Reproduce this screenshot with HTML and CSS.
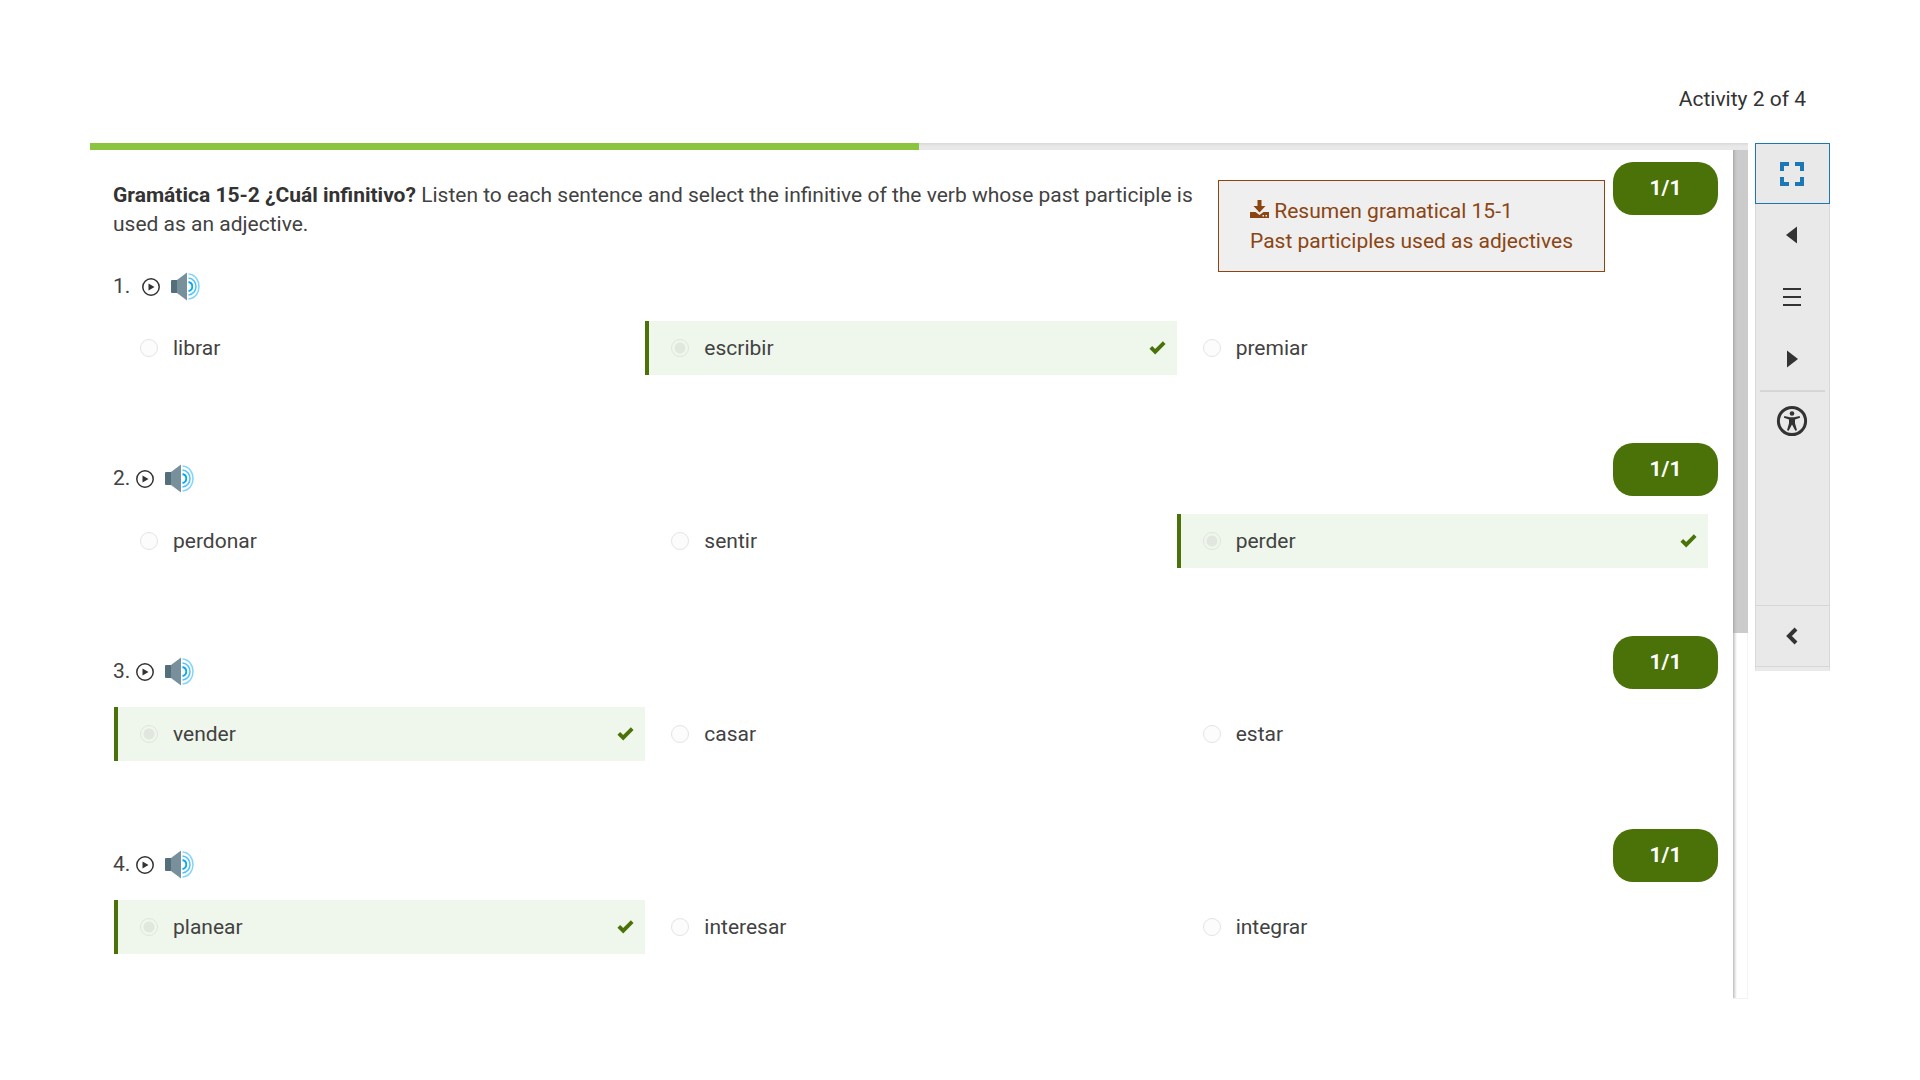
FILE: index.html
```html
<!DOCTYPE html>
<html lang="en">
<head>
<meta charset="utf-8">
<meta name="viewport" content="width=device-width, initial-scale=1">
<title>Gramática 15-2</title>
<link rel="stylesheet" href="styles.css">
</head>
<body>
<svg class="sprite" aria-hidden="true">
  <symbol id="play" viewBox="0 0 20 20"><circle cx="10" cy="10" r="8.200" fill="none" stroke="#333" stroke-width="1.500"/><path d="M7.500 6.500v7l6-3.500z" fill="#333"/></symbol>
  <symbol id="speaker" viewBox="0 0 30 30">
    <path d="M1 9q0-1 1-1h6v13H2q-1 0-1-1z" fill="#546e7a"/><path d="M7 8 17 .5v28L7 21z" fill="#78909c"/>
    <g fill="none" stroke-width="1.5"><path d="M18.500 10c5 1 5 8 0 9" stroke="#03a9f4" stroke-width="1.800"/><path d="M18.500 6c10 1 10 16 0 17" stroke="#4fc3f7"/><path d="M18.500 2c14 1 14 24 0 25" stroke="#81d4fa"/></g>
  </symbol>
  <symbol id="check" viewBox="0 0 17 17"><path fill="none" stroke="#4a7208" stroke-width="3.800" d="m1.800 7.300 4.400 4.400 9-9"/></symbol>
</svg>

<div class="page">
  <header class="page-header">Activity 2 of 4</header>
  <div class="workspace">
    <main class="player">
      <div class="progress" role="progressbar" aria-label="Progress" aria-valuenow="50"><div class="progress-value" style="width:50%"></div></div>
      <div class="viewport">
        <div class="activity">
          <div class="intro">
            <p class="direction"><strong>Gramática 15-2 ¿Cuál infinitivo?</strong> Listen to each sentence and select the infinitive of the verb whose past participle is used as an adjective.</p>
            <a class="summary" href="#resumen"><svg class="download" viewBox="0 0 19 18" aria-hidden="true"><path fill="currentColor" fill-rule="evenodd" d="M7.500 0h4v6h4L9.500 12.500 3.500 6h4zM0 12h5.500l4 3 4-3H19v6H0zM12.500 15v1.500H14V15zm3 0v1.500H17V15z"/></svg> Resumen gramatical 15-1<br>Past participles used as adjectives</a>
            <span class="score">1/1</span>
          </div>

          <section class="question question-first">
            <div class="question-head"><span class="number">1.&nbsp;</span>
              <button class="sound" aria-label="Play"><svg class="play"><use href="#play"/></svg></button>
              <button class="sound" aria-label="Audio 1"><svg class="speaker"><use href="#speaker"/></svg></button>
            </div>
            <div class="options">
              <label class="option"><input type="radio" name="q1" disabled>librar</label>
              <label class="option correct"><input type="radio" name="q1" disabled checked>escribir<svg class="check"><use href="#check"/></svg></label>
              <label class="option"><input type="radio" name="q1" disabled>premiar</label>
            </div>
          </section>

          <section class="question">
            <div class="question-head"><span class="number">2.</span>
              <button class="sound" aria-label="Play"><svg class="play"><use href="#play"/></svg></button>
              <button class="sound" aria-label="Audio 2"><svg class="speaker"><use href="#speaker"/></svg></button>
              <span class="score">1/1</span>
            </div>
            <div class="options">
              <label class="option"><input type="radio" name="q2" disabled>perdonar</label>
              <label class="option"><input type="radio" name="q2" disabled>sentir</label>
              <label class="option correct"><input type="radio" name="q2" disabled checked>perder<svg class="check"><use href="#check"/></svg></label>
            </div>
          </section>

          <section class="question">
            <div class="question-head"><span class="number">3.</span>
              <button class="sound" aria-label="Play"><svg class="play"><use href="#play"/></svg></button>
              <button class="sound" aria-label="Audio 3"><svg class="speaker"><use href="#speaker"/></svg></button>
              <span class="score">1/1</span>
            </div>
            <div class="options">
              <label class="option correct"><input type="radio" name="q3" disabled checked>vender<svg class="check"><use href="#check"/></svg></label>
              <label class="option"><input type="radio" name="q3" disabled>casar</label>
              <label class="option"><input type="radio" name="q3" disabled>estar</label>
            </div>
          </section>

          <section class="question">
            <div class="question-head"><span class="number">4.</span>
              <button class="sound" aria-label="Play"><svg class="play"><use href="#play"/></svg></button>
              <button class="sound" aria-label="Audio 4"><svg class="speaker"><use href="#speaker"/></svg></button>
              <span class="score">1/1</span>
            </div>
            <div class="options">
              <label class="option correct"><input type="radio" name="q4" disabled checked>planear<svg class="check"><use href="#check"/></svg></label>
              <label class="option"><input type="radio" name="q4" disabled>interesar</label>
              <label class="option"><input type="radio" name="q4" disabled>integrar</label>
            </div>
          </section>
        </div>
        <div class="scroll-track"><div class="scroll-thumb"></div></div>
      </div>
    </main>

    <nav class="toolbar" aria-label="Activity tools">
      <button class="tool tool-active" aria-label="Full screen"><svg width="26" height="26" viewBox="0 0 26 26"><path fill="none" stroke="#1b78b5" stroke-width="4" d="M3 10V3h7M16 3h7v7M23 16v7h-7M10 23H3v-7"/></svg></button>
      <button class="tool" aria-label="Previous"><svg width="12" height="18" viewBox="0 0 12 18"><path fill="#333" d="M11 .5v17L0 9z"/></svg></button>
      <button class="tool" aria-label="Contents"><svg width="18" height="18" viewBox="0 0 18 18"><path stroke="#333" stroke-width="2" d="M0 1h18M0 9h18M0 17h18"/></svg></button>
      <button class="tool" aria-label="Next"><svg width="12" height="18" viewBox="0 0 12 18"><path fill="#333" d="M1 .5v17L12 9z"/></svg></button>
      <div class="divider"></div>
      <button class="tool" aria-label="Accessibility"><svg width="32" height="32" viewBox="0 0 32 32"><circle cx="16" cy="16" r="13.600" fill="none" stroke="#333" stroke-width="3"/><circle cx="16" cy="8.500" r="2.300" fill="#333"/><path fill="#333" d="m8.400 11 5.600 1.300h4L23.600 11l.5 1.700-5.100 1.700v3.800l2 7-1.700.6L16 19.500l-3.300 6.300-1.700-.6 2-7v-3.800l-5.100-1.700z"/></svg></button>
      <button class="tool tool-collapse" aria-label="Collapse"><svg width="12" height="18" viewBox="0 0 12 18"><path fill="none" stroke="#333" stroke-width="4" d="M10 2 3 9l7 7"/></svg></button>
    </nav>
  </div>
</div>
</body>
</html>
```
FILE: styles.css
```css
* { box-sizing: border-box; }

body {
  margin: 0;
  background: #fff;
  color: #424242;
  font: 21px/30px Roboto, sans-serif;
}

.sprite { position: absolute; width: 0; height: 0; }

button {
  padding: 0;
  border: 0;
  background: none;
  font: inherit;
  cursor: pointer;
}

svg { display: block; }

.page { padding: 0 90px; }

.page-header {
  padding: 84px 24px 29px 0;
  color: #333;
  text-align: right;
}

.workspace {
  display: flex;
  align-items: flex-start;
  gap: 7px;
}

.player { flex: 1; }

.progress {
  height: 7px;
  background: linear-gradient(#d8d8d8, #e8e8e8 3px);
}

.progress-value { height: 100%; background: #8bc53f; }

.viewport { display: flex; }

.activity { flex: 1; padding: 0 15px 45px 23px; }

.intro {
  display: flex;
  align-items: flex-start;
  height: 121px;
}

.direction {
  flex: 1;
  margin: 0;
  padding: 31px 12px 0 0;
  line-height: 29px;
}

strong { color: #333; font-weight: 700; }

.summary {
  margin: 30px 8px 0 0;
  padding: 15px 31px;
  border: 1px solid #8b4513;
  background: #efefef;
  color: #8b4513;
  text-decoration: none;
  white-space: nowrap;
}

.download {
  display: inline-block;
  width: 19px;
  height: 18px;
}

.score {
  width: 105px;
  margin: 12px 0 0;
  border-radius: 20px;
  background: #4a7208;
  color: #fff;
  font-weight: 700;
  line-height: 53px;
  text-align: center;
}

.question { padding-bottom: 68px; }

.question:last-child { padding-bottom: 0; }

.question-head {
  display: flex;
  align-items: center;
  height: 71px;
  padding-bottom: 1px;
}

.question-first .question-head {
  align-items: flex-start;
  height: 50px;
}

.number { margin-right: 5px; }

.sound { padding-top: 2px; }

.play { width: 20px; height: 20px; }

.speaker { width: 30px; height: 30px; margin-left: 9px; }

.question-head .score { margin: 0 0 0 auto; align-self: flex-start; }

.question-first .sound { height: 30px; display: flex; align-items: center; }

.options {
  display: grid;
  grid-template-columns: repeat(3, 1fr);
  margin: 0 10px 0 1px;
}

.option {
  display: flex;
  align-items: center;
  height: 54px;
  padding: 0 11px 0 22px;
  border-left: 4px solid transparent;
}

.option input {
  width: 18px;
  height: 18px;
  margin: 0 15px 0 0;
  border: 1px solid #e4e4e4;
  border-radius: 50%;
  background: #fcfcfc;
  appearance: none;
}

.correct { border-color: #4a7208; background: #eff7ec; }

.correct input {
  border-color: #dfe5dc;
  background: radial-gradient(circle, #e1e7de 5px, #eff7ec 6px);
}

.check { width: 17px; height: 17px; margin-left: auto; }

.scroll-track {
  width: 15px;
  border: solid #f3f3f3;
  border-width: 0 1px 1px 0;
  background: linear-gradient(90deg, #bdbdbd, #e4e4e4 2px, #fff 4px);
}

.scroll-thumb {
  width: 15px;
  height: 57%;
  background: linear-gradient(90deg, #aaa, #c0c0c0 2px, #cbcbcb 4px);
}

.toolbar {
  display: flex;
  flex-direction: column;
  width: 75px;
  min-height: 528px;
  border: 1px solid #d8d8d8;
  border-width: 0 1px 4px;
  border-bottom-color: #e9e9e9;
  background: #e9e9e9;
}

.tool {
  display: flex;
  align-items: center;
  justify-content: center;
  height: 62px;
  padding-right: 1px;
}

.tool-active { height: 61px; margin: 0 -1px; border: 1px solid #1b78b5; }

.divider { height: 2px; margin: 0 4px -2px; background: #d6d6d6; }

.tool-collapse {
  margin-top: auto;
  border: solid #d6d6d6;
  border-width: 1px 0;
}
```
